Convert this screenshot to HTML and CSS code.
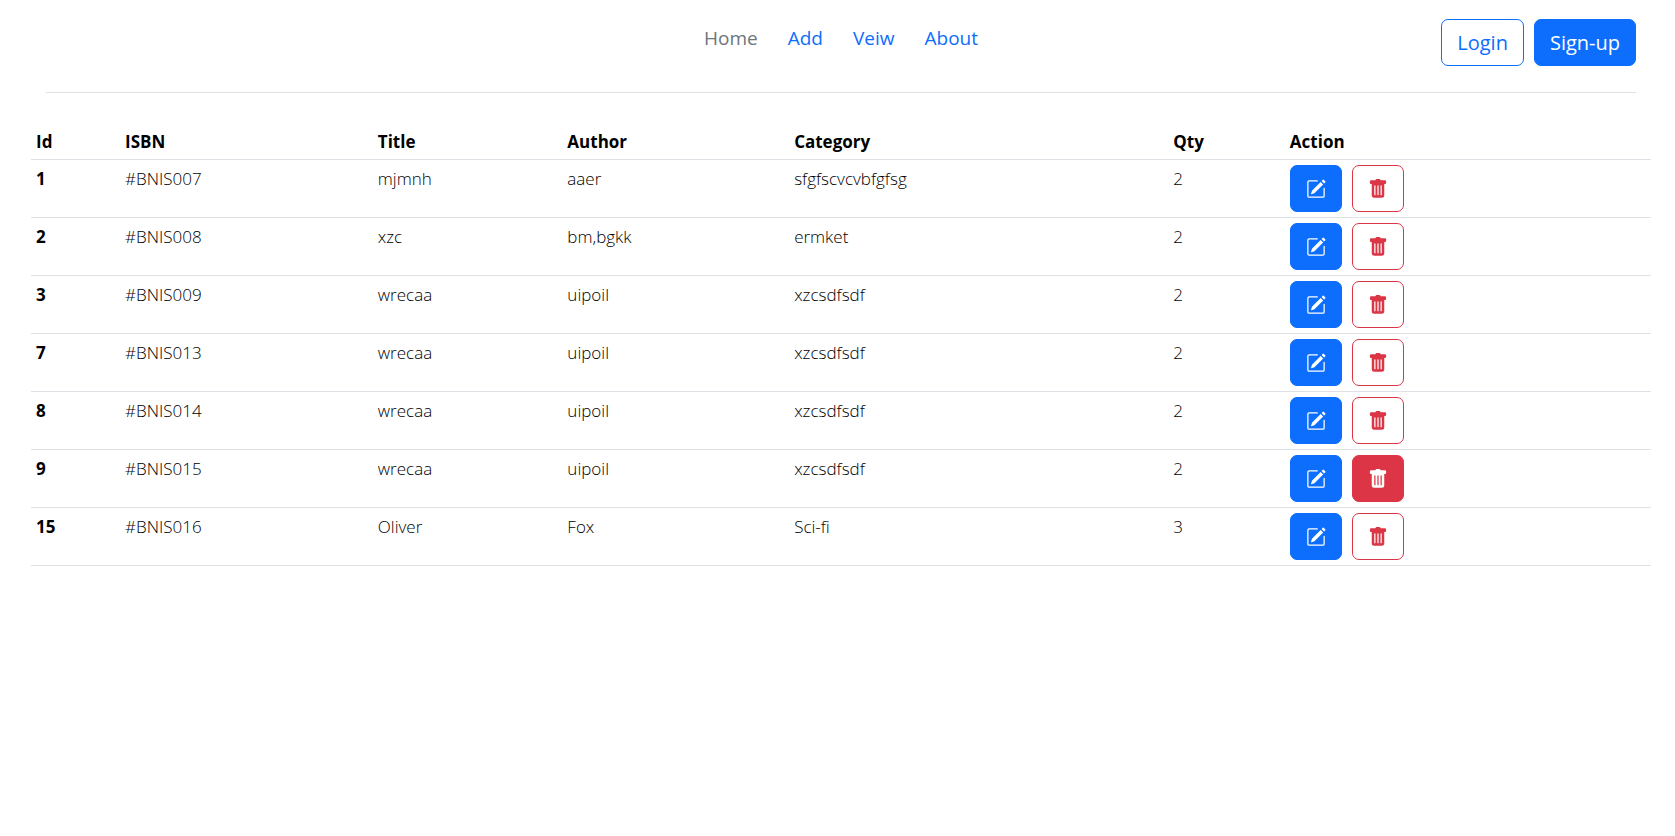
FILE: index.html
```
<!DOCTYPE html>
<html lang="en">
<head>
<meta charset="utf-8">
<meta name="viewport" content="width=device-width, initial-scale=1">
<title>Books</title>
<link rel="stylesheet" href="styles.css">
</head>
<body>
<svg class="sprite" aria-hidden="true">
  <symbol id="pencil" viewBox="0 0 16 16">
    <path d="M15.502 1.94a.5.5 0 0 1 0 .706L14.459 3.69l-2-2L13.502.646a.5.5 0 0 1 .707 0l1.293 1.293zm-1.75 2.456-2-2L4.939 9.21a.5.5 0 0 0-.121.196l-.805 2.414a.25.25 0 0 0 .316.316l2.414-.805a.5.5 0 0 0 .196-.12l6.813-6.814z"/>
    <path fill-rule="evenodd" d="M1 13.5A1.5 1.5 0 0 0 2.500 15h11a1.500 1.500 0 0 0 1.500-1.500v-6a.5.5 0 0 0-1 0v6a.5.5 0 0 1-.5.5h-11a.5.5 0 0 1-.5-.5v-11a.5.5 0 0 1 .5-.5H9a.5.5 0 0 0 0-1H2.500A1.500 1.500 0 0 0 1 2.500v11z"/>
  </symbol>
  <symbol id="trash" viewBox="0 0 16 16">
    <path d="M2.5 1a1 1 0 0 0-1 1v1a1 1 0 0 0 1 1H3v9a2 2 0 0 0 2 2h6a2 2 0 0 0 2-2V4h.5a1 1 0 0 0 1-1V2a1 1 0 0 0-1-1H10a1 1 0 0 0-1-1H7a1 1 0 0 0-1 1H2.5zm3 4a.5.5 0 0 1 .5.5v7a.5.5 0 0 1-1 0v-7a.5.5 0 0 1 .5-.5zM8 5a.5.5 0 0 1 .5.5v7a.5.5 0 0 1-1 0v-7A.5.5 0 0 1 8 5zm3 .5v7a.5.5 0 0 1-1 0v-7a.5.5 0 0 1 1 0z"/>
  </symbol>
</svg>
<header class="topbar">
  <nav class="nav">
    <a class="nav-link current" href="#home">Home</a>
    <a class="nav-link" href="#add">Add</a>
    <a class="nav-link" href="#view">Veiw</a>
    <a class="nav-link" href="#about">About</a>
  </nav>
  <div class="account">
    <button type="button" class="btn btn-outline">Login</button>
    <button type="button" class="btn btn-primary">Sign-up</button>
  </div>
</header>
<main class="content">
  <table class="books">
    <colgroup><col class="c-id"><col class="c-isbn"><col class="c-title"><col class="c-author"><col class="c-category"><col class="c-qty"><col></colgroup>
    <thead>
      <tr><th scope="col">Id</th><th scope="col">ISBN</th><th scope="col">Title</th><th scope="col">Author</th><th scope="col">Category</th><th scope="col">Qty</th><th scope="col">Action</th></tr>
    </thead>
    <tbody>
      <tr><th scope="row">1</th><td>#BNIS007</td><td>mjmnh</td><td>aaer</td><td>sfgfscvcvbfgfsg</td><td>2</td><td><div class="actions"><button type="button" class="btn btn-primary" aria-label="Edit"><svg class="icon"><use href="#pencil"/></svg></button><button type="button" class="btn btn-danger" aria-label="Delete"><svg class="icon"><use href="#trash"/></svg></button></div></td></tr>
      <tr><th scope="row">2</th><td>#BNIS008</td><td>xzc</td><td>bm,bgkk</td><td>ermket</td><td>2</td><td><div class="actions"><button type="button" class="btn btn-primary" aria-label="Edit"><svg class="icon"><use href="#pencil"/></svg></button><button type="button" class="btn btn-danger" aria-label="Delete"><svg class="icon"><use href="#trash"/></svg></button></div></td></tr>
      <tr><th scope="row">3</th><td>#BNIS009</td><td>wrecaa</td><td>uipoil</td><td>xzcsdfsdf</td><td>2</td><td><div class="actions"><button type="button" class="btn btn-primary" aria-label="Edit"><svg class="icon"><use href="#pencil"/></svg></button><button type="button" class="btn btn-danger" aria-label="Delete"><svg class="icon"><use href="#trash"/></svg></button></div></td></tr>
      <tr><th scope="row">7</th><td>#BNIS013</td><td>wrecaa</td><td>uipoil</td><td>xzcsdfsdf</td><td>2</td><td><div class="actions"><button type="button" class="btn btn-primary" aria-label="Edit"><svg class="icon"><use href="#pencil"/></svg></button><button type="button" class="btn btn-danger" aria-label="Delete"><svg class="icon"><use href="#trash"/></svg></button></div></td></tr>
      <tr><th scope="row">8</th><td>#BNIS014</td><td>wrecaa</td><td>uipoil</td><td>xzcsdfsdf</td><td>2</td><td><div class="actions"><button type="button" class="btn btn-primary" aria-label="Edit"><svg class="icon"><use href="#pencil"/></svg></button><button type="button" class="btn btn-danger" aria-label="Delete"><svg class="icon"><use href="#trash"/></svg></button></div></td></tr>
      <tr><th scope="row">9</th><td>#BNIS015</td><td>wrecaa</td><td>uipoil</td><td>xzcsdfsdf</td><td>2</td><td><div class="actions"><button type="button" class="btn btn-primary" aria-label="Edit"><svg class="icon"><use href="#pencil"/></svg></button><button type="button" class="btn btn-danger active" aria-label="Delete"><svg class="icon"><use href="#trash"/></svg></button></div></td></tr>
      <tr><th scope="row">15</th><td>#BNIS016</td><td>Oliver</td><td>Fox</td><td>Sci-fi</td><td>3</td><td><div class="actions"><button type="button" class="btn btn-primary" aria-label="Edit"><svg class="icon"><use href="#pencil"/></svg></button><button type="button" class="btn btn-danger" aria-label="Delete"><svg class="icon"><use href="#trash"/></svg></button></div></td></tr>
    </tbody>
  </table>
</main>
</body>
</html>
```
FILE: styles.css
```
* { box-sizing: border-box; }

body {
  margin: 0;
  background: #fff;
  color: #000;
  font-family: "Segoe UI", "Open Sans", "Noto Sans", sans-serif;
  font-size: 17px;
  line-height: 27px;
}

.sprite { position: absolute; width: 0; height: 0; }

.topbar {
  display: grid;
  grid-template-columns: 1fr auto 1fr;
  align-items: start;
  margin: 0 39px 0 46px;
  padding: 19px 0 26px;
  border-bottom: 1px solid #dee2e6;
}

.nav {
  grid-column: 2;
  display: flex;
  gap: 30px;
  padding-top: 6px;
}

.nav-link {
  color: #0d6efd;
  font-size: 19px;
  text-decoration: none;
}

.nav-link.current { color: #6c757d; }

.account {
  display: flex;
  justify-content: flex-end;
  gap: 10px;
}

.btn {
  display: inline-flex;
  align-items: center;
  justify-content: center;
  padding: 9px 15px;
  border: 1px solid #0d6efd;
  border-radius: 7px;
  background: #fff;
  color: #0d6efd;
  font-family: inherit;
  font-size: 20px;
  line-height: 27px;
  cursor: pointer;
}

.btn-primary { background: #0d6efd; color: #fff; }
.btn-danger { border-color: #dc3545; color: #dc3545; }
.btn-danger.active { background: #dc3545; color: #fff; }

.content { padding: 30px 24px 0 31px; }

.books {
  width: 100%;
  table-layout: fixed;
  border-collapse: separate;
  border-spacing: 0;
}

.c-id { width: 5.5%; }
.c-isbn { width: 15.6%; }
.c-title { width: 11.7%; }
.c-author { width: 14%; }
.c-category { width: 23.4%; }
.c-qty { width: 7.2%; }

.books th,
.books td {
  padding: 5px;
  border-bottom: 1px solid #dee2e6;
  text-align: left;
  vertical-align: top;
}

.books th { font-weight: 700; }
.books td { font-weight: 300; }
.books thead th { padding-bottom: 4px; }

.actions { display: flex; gap: 10px; }
.actions .btn { width: 52px; height: 47px; }

.icon {
  display: block;
  flex: none;
  width: 20px;
  height: 20px;
  fill: currentColor;
}
```
